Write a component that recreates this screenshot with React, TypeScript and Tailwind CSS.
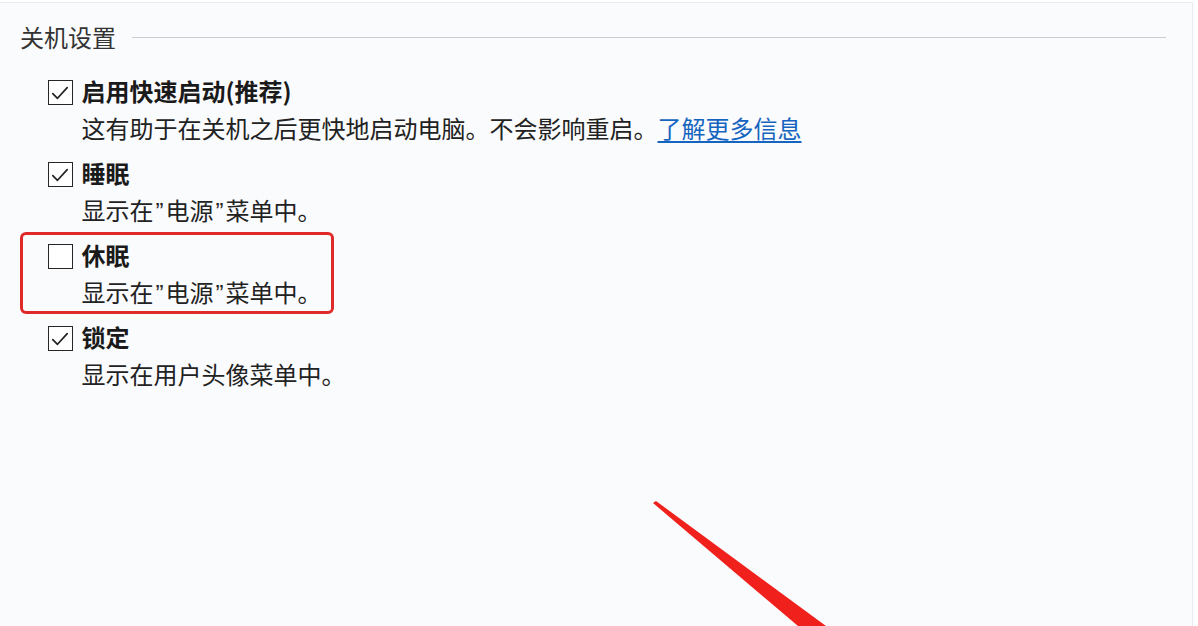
import React from "react";

const font = { fontFamily: '"Noto Sans CJK SC", "Noto Sans", sans-serif' };

type Item = {
  label: string;
  desc: React.ReactNode;
  checked: boolean;
  link?: string;
  highlight?: boolean;
};

// narrow latin quote, like the original dialog's font
const Q: React.FC<{ c: string }> = ({ c }) => (
  <span
    className="inline-block w-[12px] text-center leading-none"
    style={{ fontFamily: '"Liberation Sans", sans-serif' }}
  >
    {c}
  </span>
);

const powerMenu = (
  <>
    显示在<Q c="”" />电源<Q c="”" />菜单中。
  </>
);

const items: Item[] = [
  {
    label: "启用快速启动(推荐)",
    desc: "这有助于在关机之后更快地启动电脑。不会影响重启。",
    checked: true,
    link: "了解更多信息",
  },
  { label: "睡眠", desc: powerMenu, checked: true },
  { label: "休眠", desc: powerMenu, checked: false, highlight: true },
  { label: "锁定", desc: "显示在用户头像菜单中。", checked: true },
];

const Checkbox: React.FC<{ checked: boolean }> = ({ checked }) => (
  <div className="mt-[8px] w-[25px] h-[25px] shrink-0 border-[1.8px] border-[#262626] bg-white flex items-center justify-center">
    {checked && (
      <svg width="20" height="20" viewBox="0 0 20 20" fill="none">
        <path
          d="M2.8 10.6 L7.5 15.3 L17.2 4.6"
          stroke="#222"
          strokeWidth="1.7"
          strokeLinecap="round"
          strokeLinejoin="round"
        />
      </svg>
    )}
  </div>
);

const App: React.FC = () => {
  return (
    <div className="relative w-[1198px] h-[626px] overflow-hidden bg-white" style={font}>
      <div className="mt-[2px] w-[1193px] h-[624px] border-t border-r border-[#e9ecf0] bg-[#fafbfd]">
        {/* header */}
        <div className="flex items-center pl-[20px] pt-[16px] h-[53px]">
          <span className="text-[24px] leading-[37px] text-[#333] -mt-[3px]">关机设置</span>
          <div className="ml-[16px] w-[1034px] h-[1.5px] bg-[#c8ccd3]" />
        </div>

        <div className="mt-[12px] pl-[20px]">
          {items.map((it) => (
            <div
              key={it.label}
              className={
                it.highlight
                  ? "w-[314px] border-[3.5px] border-[#e02a2a] rounded-[6px] pt-[1px] pb-[1px] pl-[24.5px]"
                  : "w-[314px] border-[3.5px] border-transparent pt-[1px] pb-[1px] pl-[24.5px]"
              }
            >
              <div className="flex gap-[9px]">
                <Checkbox checked={it.checked} />
                <div>
                  <div className="h-[37px] text-[24px] leading-[37px] font-bold text-[#1a1a1a] whitespace-nowrap">
                    {it.label}
                  </div>
                  <div className="h-[37px] text-[24px] leading-[37px] text-[#222] whitespace-nowrap">
                    {it.desc}
                    {it.link && (
                      <a className="text-[#1565c0] underline underline-offset-[3px] cursor-pointer">
                        {it.link}
                      </a>
                    )}
                  </div>
                </div>
              </div>
            </div>
          ))}
        </div>
      </div>

      {/* red annotation arrow */}
      <svg
        className="absolute left-0 top-0 pointer-events-none"
        width="1198"
        height="626"
        viewBox="0 0 1198 626"
      >
        <polygon points="653,503 656,501 826,626 798,626" fill="#f0201c" />
      </svg>
    </div>
  );
};

export default App;
